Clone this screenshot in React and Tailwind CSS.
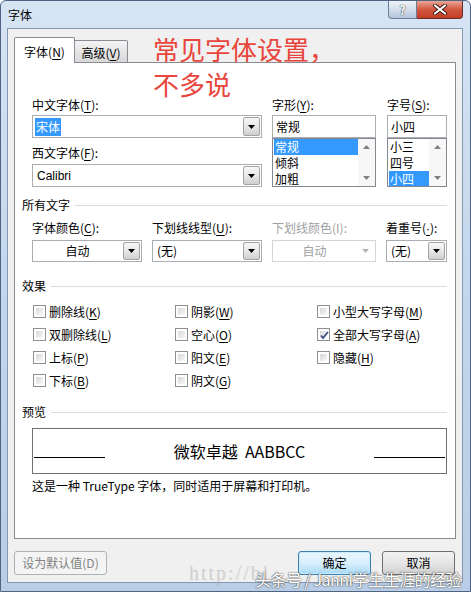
import React from "react";

const U = ({ children }) => <span className="underline underline-offset-[2px]">{children}</span>;

const DownArrow = ({ color = "#000" }) => (
  <svg width="7" height="4" viewBox="0 0 7 4">
    <path d="M0 0h7L3.5 4z" fill={color} />
  </svg>
);

const UpArrow = ({ color = "#808080" }) => (
  <svg width="7" height="4" viewBox="0 0 7 4">
    <path d="M0 4h7L3.5 0z" fill={color} />
  </svg>
);

const Combo = ({ width, height = "h-[22px]", text, center, disabled, children }) => (
  <div
    className={`flex ${width} ${height} border bg-white ${
      disabled ? "border-[#d5d5d5]" : "border-[#abadb3]"
    }`}
  >
    <div
      className={`flex-1 flex items-center ${center ? "justify-center" : "pl-[2px]"} ${
        disabled ? "text-[#a0a0a0]" : "text-black"
      }`}
    >
      {children || text}
    </div>
    {disabled ? (
      <div className="w-[17px] m-px flex items-center justify-center">
        <DownArrow color="#b4b4b4" />
      </div>
    ) : (
      <div className="w-[17px] m-px border border-[#a3a3a3] rounded-[2px] flex items-center justify-center bg-gradient-to-b from-[#f7f7f7] via-[#e8e8e8] to-[#cfcfcf]">
        <DownArrow />
      </div>
    )}
  </div>
);

const ListBox = ({ items, selected }) => (
  <div className="flex h-[49px] border border-[#828790] bg-white overflow-hidden">
    <div className="flex-1 flex flex-col">
      {items.map((it, i) => (
        <div key={it} className="h-[16px] leading-[16px] shrink-0 pl-[1px]">
          <span
            className={`block pl-[1px] ${i === selected ? "bg-[#3399ff] text-white" : "text-black"}`}
          >
            {it}
          </span>
        </div>
      ))}
    </div>
    <div className="w-[17px] bg-[#f7f7f7] flex flex-col items-center justify-between py-[6px]">
      <UpArrow />
      <DownArrow color="#808080" />
    </div>
  </div>
);

const Section = ({ title }) => (
  <div className="flex items-center h-[16px] leading-[16px]">
    <span>{title}</span>
    <div className="flex-1 h-px bg-[#dcdcdc] ml-[5px]" />
  </div>
);

const Check = ({ label, checked }) => (
  <div className="flex items-center h-[23px]">
    <div className="ml-px w-[13px] h-[13px] border border-[#8e8f8f] bg-white p-[2px]">
      <div className="w-full h-full bg-gradient-to-br from-[#d9d9d9] to-[#f7f7f7] relative">
        {checked && (
          <svg className="absolute -left-[1px] -top-[1px]" width="11" height="11" viewBox="0 0 11 11">
            <path d="M2 5.5l2 2.5 5-6" stroke="#3d4f86" strokeWidth="1.8" fill="none" />
          </svg>
        )}
      </div>
    </div>
    <span className="ml-[3px] leading-[16px]">{label}</span>
  </div>
);

export default function App() {
  return (
    <div className="w-[471px] h-[592px] flex flex-col border border-[#4f6482] rounded-t-[6px] bg-gradient-to-b from-[#d6e4f4] via-[#c3d6ec] to-[#b9cde6] font-['Noto_Sans_CJK_SC','Liberation_Sans',sans-serif] text-[12px] text-black relative overflow-hidden">
      {/* title bar */}
      <div className="h-[27px] flex items-start shrink-0">
        <div className="pl-[7px] pt-[6px] leading-[16px]">字体</div>
        <div className="ml-auto mr-[7px] flex">
          <div className="w-[29px] h-[18px] border border-[#6c7f99] border-t-0 rounded-bl-[4px] bg-gradient-to-b from-[#eef3f9] via-[#d4dfec] to-[#b4c5db] flex items-center justify-center">
            <span className="text-[13px] font-bold leading-none text-white [text-shadow:0_0_1px_#333,0_0_1px_#333]">
              ?
            </span>
          </div>
          <div className="w-[46px] h-[18px] border border-[#6a2d25] border-t-0 border-l-0 rounded-br-[4px] bg-gradient-to-b from-[#e9a596] via-[#d2563f] to-[#c23d23] flex items-center justify-center">
            <svg width="14" height="11" viewBox="0 0 14 11">
              <path d="M2 1.5l10 8M12 1.5l-10 8" stroke="#3b1a14" strokeWidth="4" strokeLinecap="round" />
              <path d="M2 1.5l10 8M12 1.5l-10 8" stroke="#fff" strokeWidth="2.2" strokeLinecap="round" />
            </svg>
          </div>
        </div>
      </div>

      {/* client area */}
      <div className="ml-[6px] mr-[7px] h-[555px] shrink-0 border border-[#8598b2] bg-[#f0f0f0] pt-[8px] px-[6px] flex flex-col">
        {/* tabs */}
        <div className="flex items-end h-[26px] -mb-px relative z-10">
          <div className="w-[61px] h-[26px] border border-[#898c95] border-b-0 rounded-t-[2px] bg-white flex items-center justify-center pt-[2px]">
            字体(<U>N</U>)
          </div>
          <div className="w-[53px] h-[23px] border border-[#898c95] border-l-0 rounded-tr-[2px] bg-gradient-to-b from-[#f4f4f4] to-[#d8d8d8] flex items-center justify-center pt-[2px]">
            高级(<U>V</U>)
          </div>
        </div>

        {/* tab page */}
        <div className="h-[477px] border border-[#898c95] bg-white pl-[7px] pr-[8px] pt-[34px] flex flex-col">
          <div className="flex pl-[10px]">
            <div className="w-[230px] flex flex-col">
              <div className="h-[16px] leading-[16px]">
                中文字体(<U>T</U>):
              </div>
              <div className="mt-[2px]">
                <Combo width="w-[230px]" height="h-[23px]">
                  <span className="bg-[#3399ff] text-white px-px">宋体</span>
                </Combo>
              </div>
              <div className="mt-[7px] h-[16px] leading-[16px]">
                西文字体(<U>F</U>):
              </div>
              <div className="mt-[3px]">
                <Combo width="w-[230px]" height="h-[23px]" text={<span className="pl-[2px] font-['Liberation_Sans',sans-serif]">Calibri</span>} />
              </div>
            </div>
            <div className="ml-[10px] w-[104px] flex flex-col">
              <div className="h-[16px] leading-[16px]">
                字形(<U>Y</U>):
              </div>
              <div className="mt-[2px] h-[23px] border border-[#abadb3] bg-white flex items-center pl-[3px]">常规</div>
              <ListBox items={["常规", "倾斜", "加粗"]} selected={0} />
            </div>
            <div className="ml-[11px] w-[60px] flex flex-col">
              <div className="h-[16px] leading-[16px]">
                字号(<U>S</U>):
              </div>
              <div className="mt-[2px] h-[23px] border border-[#abadb3] bg-white flex items-center pl-[3px]">小四</div>
              <ListBox items={["小三", "四号", "小四"]} selected={2} />
            </div>
          </div>

          <div className="mt-[10px]">
            <Section title="所有文字" />
          </div>
          <div className="mt-[7px] pl-[10px] flex gap-[10px]">
            <div className="w-[110px]">
              <div className="h-[16px] leading-[16px]">
                字体颜色(<U>C</U>):
              </div>
              <div className="mt-[4px]">
                <Combo width="w-[110px]" text="自动" center />
              </div>
            </div>
            <div className="w-[110px]">
              <div className="h-[16px] leading-[16px]">
                下划线线型(<U>U</U>):
              </div>
              <div className="mt-[4px]">
                <Combo width="w-[110px]" text={<span className="pl-[2px]">(无)</span>} />
              </div>
            </div>
            <div className="w-[104px]">
              <div className="h-[16px] leading-[16px] text-[#a0a0a0]">下划线颜色(I):</div>
              <div className="mt-[4px]">
                <Combo width="w-[104px]" text="自动" center disabled />
              </div>
            </div>
            <div className="w-[61px]">
              <div className="h-[16px] leading-[16px] whitespace-nowrap">
                着重号(<span className="underline underline-offset-[2px] font-['Liberation_Sans',sans-serif]">·</span>):
              </div>
              <div className="mt-[4px]">
                <Combo width="w-[61px]" text={<span className="pl-[2px]">(无)</span>} />
              </div>
            </div>
          </div>

          <div className="mt-[16px]">
            <Section title="效果" />
          </div>
          <div className="mt-[6px] pl-[10px] grid grid-cols-[142px_142px_1fr]">
            <Check label={<>删除线(<U>K</U>)</>} />
            <Check label={<>阴影(<U>W</U>)</>} />
            <Check label={<>小型大写字母(<U>M</U>)</>} />
            <Check label={<>双删除线(<U>L</U>)</>} />
            <Check label={<>空心(<U>O</U>)</>} />
            <Check label={<>全部大写字母(<U>A</U>)</>} checked />
            <Check label={<>上标(<U>P</U>)</>} />
            <Check label={<>阳文(<U>E</U>)</>} />
            <Check label={<>隐藏(<U>H</U>)</>} />
            <Check label={<>下标(<U>B</U>)</>} />
            <Check label={<>阴文(<U>G</U>)</>} />
          </div>

          <div className="mt-[12px]">
            <Section title="预览" />
          </div>
          <div className="mt-[8px] ml-[10px] h-[46px] border border-[#707070] flex items-center">
            <div className="w-[71px] h-px bg-black self-end mb-[15px] ml-px" />
            <div className="flex-1 text-center text-[16px] leading-[20px] whitespace-pre">微软卓越  AABBCC</div>
            <div className="w-[71px] h-px bg-black self-end mb-[15px] mr-px" />
          </div>
          <div className="mt-[4px] ml-[10px] h-[16px] leading-[16px]">
            这是一种 TrueType 字体，同时适用于屏幕和打印机。
          </div>
        </div>

        {/* buttons */}
        <div className="mt-[12px] flex pr-px">
          <div className="w-[93px] h-[24px] border border-[#adb2b5] rounded-[3px] bg-[#f4f4f4] text-[#838383] flex items-center justify-center">
            设为默认值(D)
          </div>
          <div className="ml-auto w-[73px] h-[24px] border border-[#3c7fb1] rounded-[3px] bg-gradient-to-b from-[#eaf6fd] via-[#d9f0fc] to-[#a7d9f5] shadow-[inset_0_0_0_1px_#c7ebff] flex items-center justify-center">
            确定
          </div>
          <div className="ml-[11px] w-[73px] h-[24px] border border-[#707070] rounded-[3px] bg-gradient-to-b from-[#f2f2f2] via-[#e6e6e6] to-[#cfcfcf] flex items-center justify-center">
            取消
          </div>
        </div>
      </div>

      {/* red annotation overlay */}
      <div className="absolute left-[152px] top-[30px] text-[26px] leading-[35px] text-[#e8453c]">
        <div>常见字体设置，</div>
        <div>不多说</div>
      </div>

      {/* watermark overlay */}
      <div className="absolute left-[188px] top-[560px] text-[20px] leading-[24px] font-['Liberation_Serif',serif] text-[#b0b0b0] opacity-50 tracking-[2px]">
        http://bl
      </div>
      <div className="absolute left-[254px] top-[568px] text-[16px] leading-[20px] tracking-[-0.5px] whitespace-nowrap text-white [text-shadow:0_0_2px_#555,0_0_1px_#333]">
        头条号 / Janni学生生涯的经验
      </div>
    </div>
  );
}
